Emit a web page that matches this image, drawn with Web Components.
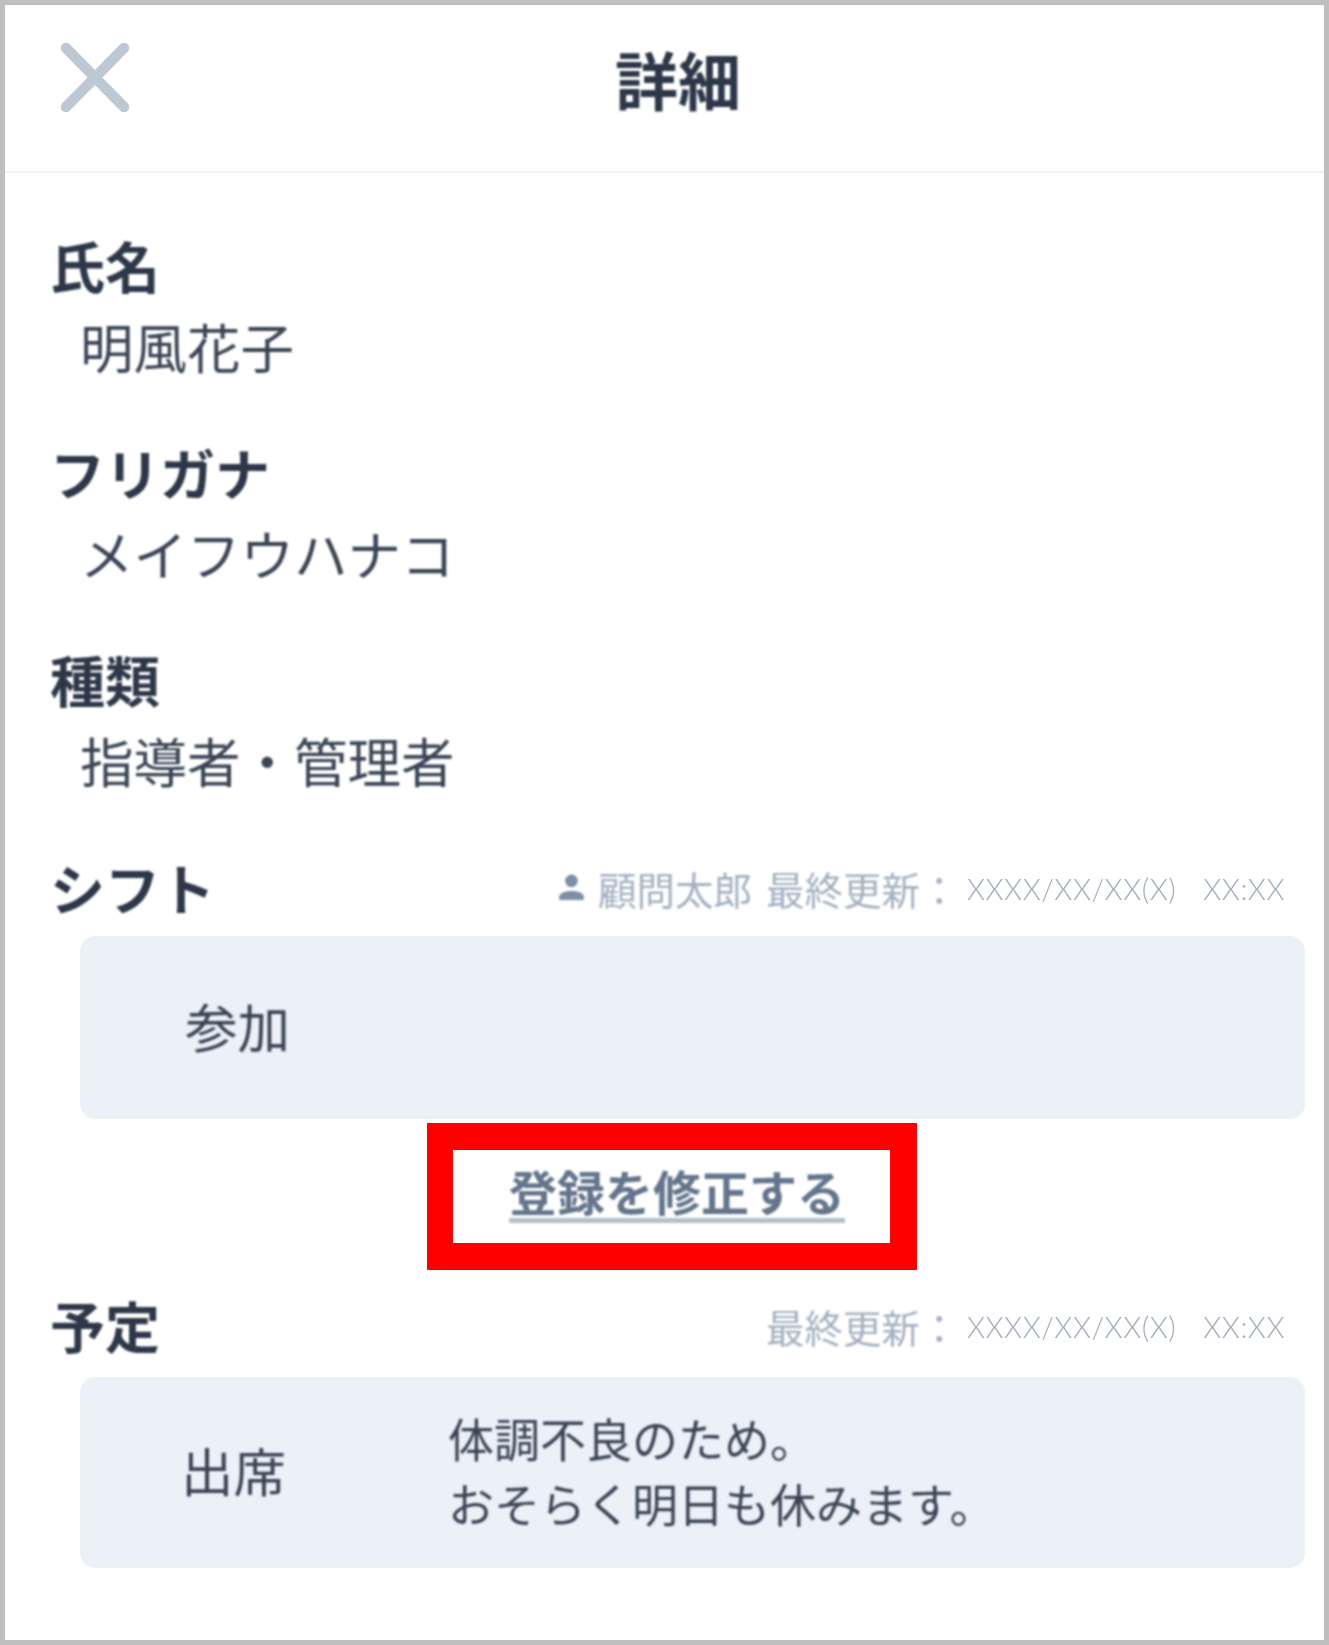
<!DOCTYPE html>
<html lang="ja"><head><meta charset="utf-8"><title>詳細</title>
<style>
html,body{margin:0;padding:0;background:#fff}
body{font-family:"Noto Sans CJK JP","Noto Sans",sans-serif;color:#2d3748}
</style></head><body>
<detail-frame>
  <detail-header>詳細</detail-header>
  <info-field style="margin-top:53px"><span slot="label">氏名</span>明風花子</info-field>
  <info-field><span slot="label">フリガナ</span>メイフウハナコ</info-field>
  <info-field><span slot="label">種類</span>指導者・管理者</info-field>
  <section-head style="margin-top:48px"><span slot="label">シフト</span><meta-line user="顧問太郎" date="XXXX/XX/XX(X)" time="XX:XX"></meta-line></section-head>
  <info-box height="183" style="margin-top:8px"><span slot="status">参加</span></info-box>
  <edit-link>登録を修正する</edit-link>
  <section-head style="margin-top:16px"><span slot="label">予定</span><meta-line date="XXXX/XX/XX(X)" time="XX:XX"></meta-line></section-head>
  <info-box height="191" style="margin-top:11px;--s-mb:7px"><span slot="status" style="margin-left:-4px">出席</span>体調不良のため。<br>おそらく明日も休みます。</info-box>
</detail-frame>
<script>
function def(name,html,init){
  customElements.define(name,class extends HTMLElement{
    constructor(){super();this.attachShadow({mode:'open'}).innerHTML=html;}
    connectedCallback(){if(init)init(this);}
  });
}
def('detail-frame',`<style>
:host{display:block;box-sizing:border-box;width:1329px;height:1645px;border:5px solid #bfbfbf;background:#fff;overflow:hidden}
</style><slot></slot>`);
def('detail-header',`<style>
:host{display:flex;align-items:center;box-sizing:border-box;height:168px;border-bottom:2px solid #edf2f7;padding-left:56px}
svg{width:68px;height:69px;flex:none;margin-top:-22px;filter:blur(.6px)}
.t{margin-left:486px;margin-top:-20px;font-size:63px;font-weight:700;line-height:80px;color:#2d3748;filter:blur(.9px)}
</style><svg viewBox="0 0 68 69"><path d="M5 5L63 64M63 5L5 64" stroke="#bdc8d4" stroke-width="10.500" stroke-linecap="round" fill="none"/></svg><div class="t"><slot></slot></div>`);
def('info-field',`<style>
:host{display:block;margin-top:47px;padding-left:45px}
.l{font-size:55px;font-weight:700;line-height:77px;height:79px;filter:blur(.9px);color:#2d3748}
.v{font-size:53.5px;font-weight:400;line-height:81px;height:81px;padding-left:30px;filter:blur(.9px);color:#3a4454}
</style><div class="l"><slot name="label"></slot></div><div class="v"><slot></slot></div>`);
def('section-head',`<style>
:host{display:flex;align-items:center;justify-content:space-between;height:80px;padding:0 39px 0 45px}
.l{font-size:55px;font-weight:700;line-height:80px;margin-top:-4px;filter:blur(.9px);color:#2d3748}
</style><div class="l"><slot name="label"></slot></div><slot></slot>`);
def('meta-line',`<style>
:host{display:flex;align-items:center;color:#a3b0c1;font-size:38.5px;line-height:50px;margin-top:-1px}
svg{width:27px;height:27px;margin-right:13px;flex:none;filter:blur(.9px);margin-top:-3px}
.u,.m{filter:blur(1.1px)}
.u{margin-right:14px}
.m{width:201px;white-space:nowrap}
.d{font-family:Lato,"Liberation Sans",sans-serif;font-size:29px;letter-spacing:.5px;font-weight:300;color:#a3afbe;position:relative;top:1px;filter:blur(.35px)}
.d2{margin-left:27px}
</style><svg id="i" viewBox="0 0 24 24"><circle cx="12" cy="7" r="5.6" fill="#7d8fa5"/><path fill="#7d8fa5" d="M1 24v-2.500c0-3.500 5-5.500 11-5.500s11 2 11 5.500V24z"/></svg><span class="u" id="u"></span><span class="m">最終更新：</span><span class="d" id="a"></span><span class="d d2" id="b"></span>`,
(el)=>{const r=el.shadowRoot;const u=el.getAttribute('user');
 if(u){r.getElementById('u').textContent=u}else{r.getElementById('u').remove();r.getElementById('i').remove()}
 r.getElementById('a').textContent=el.getAttribute('date');r.getElementById('b').textContent=el.getAttribute('time');});
def('info-box',`<style>
:host{display:grid;grid-template-columns:263px 1fr;align-items:center;box-sizing:border-box;margin:8px 19px 0 75px;padding-left:105px;background:#ecf1f8;border-radius:15px}
.s{font-size:52.5px;line-height:70px;margin-bottom:var(--s-mb,5px);filter:blur(.9px);color:#3a4454}
.n{font-size:46px;line-height:65px;margin-bottom:6px;filter:blur(.9px);color:#3a4454}
</style><div class="s"><slot name="status"></slot></div><div class="n"><slot></slot></div>`,
(el)=>{el.style.height=el.getAttribute('height')+'px'});
def('edit-link',`<style>
:host{display:block;box-sizing:border-box;width:490px;height:147px;margin:4px 0 0 422px;border:solid #f00;border-width:27px 27px 27px 26px;padding-left:56px;background:#fff}
span{display:inline-block;font-size:48px;font-weight:700;line-height:55px;margin-top:13px;color:#64748b;border-bottom:5px solid #b6bec9;filter:blur(.8px)}
</style><span><slot></slot></span>`);
</script>
</body></html>
